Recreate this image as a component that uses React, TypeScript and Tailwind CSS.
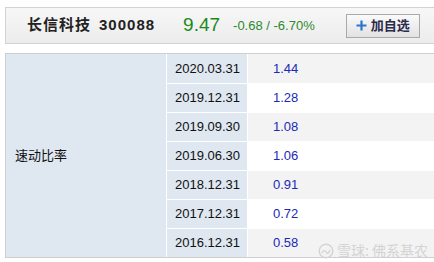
const rows = [
  ['2020.03.31', '1.44'],
  ['2019.12.31', '1.28'],
  ['2019.09.30', '1.08'],
  ['2019.06.30', '1.06'],
  ['2018.12.31', '0.91'],
  ['2017.12.31', '0.72'],
  ['2016.12.31', '0.58'],
];

const font = { fontFamily: '"Liberation Sans", Arial, "Noto Sans CJK SC", sans-serif' };

export default function App() {
  return (
    <div className="w-[434px] h-[262px] bg-white overflow-hidden relative" style={font}>
      <div className="mt-[7px] ml-[5px] w-[440px] h-[37px] border border-[#d3d3d3] bg-gradient-to-b from-[#f7f7f7] to-[#ececec] flex items-center">
        <span className="ml-[21px] text-[15px] font-bold text-[#222] tracking-[1px]">长信科技</span>
        <span className="ml-[8px] text-[15px] font-bold text-[#222] tracking-[1px]">300088</span>
        <span className="ml-[28px] text-[19px] text-[#1a8a1a]">9.47</span>
        <span className="ml-[13px] text-[13px] text-[#2c8a2c]">-0.68 / -6.70%</span>
        <button className="ml-[31px] h-[24px] w-[74px] border border-[#a9a9a9] bg-gradient-to-b from-[#fafafa] to-[#e2e2e2] flex items-center justify-center gap-[4px] text-[13px] font-semibold text-[#2a2a4a]">
          <svg width="11" height="11" viewBox="0 0 11 11">
            <path d="M5.5 0.5v10M0.5 5.5h10" stroke="#2a78cc" strokeWidth="2.2" />
          </svg>
          加自选
        </button>
      </div>
      <div className="mt-[9px] ml-[5px] w-[440px] border border-[#cfcfcf] flex">
        <div className="w-[161px] bg-[#dfe7f1] border-r border-white flex items-center pl-[9px] text-[13px] text-[#111]">
          速动比率
        </div>
        <div className="flex-1 flex flex-col">
          {rows.map(([d, v], i) => (
            <div key={d} className={`h-[29px] flex items-center ${i > 0 ? 'border-t border-white' : ''}`}>
              <div className="w-[81px] h-full bg-[#dfe7f1] border-r border-white flex items-center pl-[8px] text-[13px] text-[#111]">
                {d}
              </div>
              <div className={`flex-1 h-full flex items-center pl-[25px] text-[13px] text-[#1a2ab8] ${i % 2 === 0 ? 'bg-[#f3f3f3]' : 'bg-white'}`}>
                {v}
              </div>
            </div>
          ))}
        </div>
      </div>
      <div className="absolute left-[318px] top-[240px] flex items-center gap-[3px] text-[14px] text-[#d4d4d4]" style={{ fontFamily: '"Noto Sans CJK SC", sans-serif' }}>
        <svg width="16" height="16" viewBox="0 0 16 16" fill="none" stroke="#d4d4d4" strokeWidth="1.4">
          <circle cx="8" cy="8" r="6.8" />
          <path d="M4 10c1.5-3 3-3 4-1s2.5 2 4-2" />
        </svg>
        <span>雪球: 佛系基农</span>
      </div>
    </div>
  );
}
